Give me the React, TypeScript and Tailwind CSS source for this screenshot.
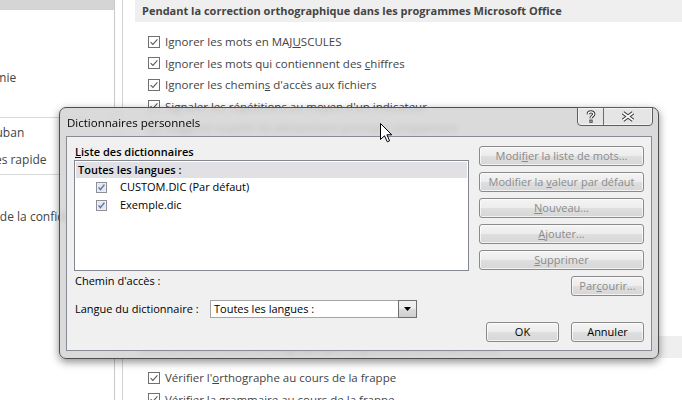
import React from "react";

const sans = "font-['Open_Sans','Noto_Sans',sans-serif]";

/** Office 2013 style check box */
function OfficeCheck() {
  return (
    <svg width="12" height="12" viewBox="0 0 12 12" className="shrink-0">
      <rect x="0.5" y="0.5" width="11" height="11" fill="#fff" stroke="#6f6f6f" />
      <path d="M2.6 6.1 4.9 8.4 9.4 3.4" fill="none" stroke="#5c5c5c" strokeWidth="1.1" />
    </svg>
  );
}

/** Windows 7 style check box used inside the list */
function WinCheck() {
  return (
    <svg width="11" height="11" viewBox="0 0 11 11" className="shrink-0">
      <rect x="0.5" y="0.5" width="10" height="10" fill="#f4f4f4" stroke="#8e8f94" />
      <rect x="1.5" y="1.5" width="8" height="8" fill="#e4e7ef" />
      <path d="M2.6 5.4 4.4 7.6 8.4 2.6" fill="none" stroke="#5f74b0" strokeWidth="1.5" />
    </svg>
  );
}

function OptionRow({ children }: { children: React.ReactNode }) {
  return (
    <div className="flex h-[21.5px] items-center gap-[5px] pl-[13px] whitespace-nowrap">
      <OfficeCheck />
      <span>{children}</span>
    </div>
  );
}

function NavItem({ children, h }: { children: React.ReactNode; h: string }) {
  return <div className={`flex items-center pl-[10px] whitespace-nowrap ${h}`}>{children}</div>;
}

function WinButton({ children, enabled, w = "w-full" }: { children: React.ReactNode; enabled?: boolean; w?: string }) {
  return (
    <div
      className={`flex h-[20px] items-center justify-center rounded-[3px] border border-[#8a8a8a] bg-[linear-gradient(to_bottom,#f4f4f4_0%,#ececec_50%,#dfdfdf_50%,#d6d6d6_100%)] shadow-[inset_0_0_0_1px_rgba(255,255,255,0.7)] ${w} ${
        enabled ? "text-black" : "text-[#8b8b8b]"
      }`}
    >
      {children}
    </div>
  );
}

function CaptionButtons() {
  return (
    <div className="-mt-px flex h-[19px] overflow-hidden rounded-b-[4px] border border-[#5e5e5e] bg-[rgba(238,238,238,0.55)] shadow-[inset_0_0_0_1px_rgba(255,255,255,0.55)]">
      <div className="flex w-[26px] items-center justify-center border-r border-[#6c6c6c]">
        <svg width="10" height="13" viewBox="0 0 10 13">
          <path d="M2.2 4.2 C2.2 1.2 7.8 1.2 7.8 4 C7.8 6.2 5 6 5 8.3" fill="none" stroke="#3a3a3a" strokeWidth="3.2" />
          <path d="M2.2 4.2 C2.2 1.2 7.8 1.2 7.8 4 C7.8 6.2 5 6 5 8.3" fill="none" stroke="#fff" strokeWidth="1.3" />
          <rect x="3.4" y="9.6" width="3.2" height="3.2" fill="#3a3a3a" />
          <rect x="4.4" y="10.6" width="1.2" height="1.2" fill="#fff" />
        </svg>
      </div>
      <div className="flex w-[48px] items-center justify-center">
        <svg width="14" height="11" viewBox="0 0 14 11">
          <path d="M2 1.8 12 9.2 M12 1.8 2 9.2" fill="none" stroke="#3a3a3a" strokeWidth="3.8" />
          <path d="M2 1.8 12 9.2 M12 1.8 2 9.2" fill="none" stroke="#fff" strokeWidth="1.7" />
        </svg>
      </div>
    </div>
  );
}

function Dialog() {
  return (
    <div className="absolute left-[59px] top-[107px] flex h-[252px] w-[600px] flex-col rounded-[7px] border border-[#4f4f4f] bg-[rgba(210,210,210,0.82)] shadow-[0_3px_8px_rgba(0,0,0,0.45)] backdrop-blur-[3px]">
      {/* title bar */}
      <div className="flex h-[28px] items-start justify-between pl-[7px] pr-[5px]">
        <span className="self-center pt-[1px] text-[11.5px] text-black">Dictionnaires personnels</span>
        <CaptionButtons />
      </div>

      {/* client area */}
      <div className="mx-[6px] mb-[7px] flex flex-1 gap-[10px] border border-[#898c95] bg-[#f0f0f0] pl-[7px] pr-[7px] text-black">
        <div className="flex w-[395px] flex-col pt-[7px]">
          <div className="flex h-[16px] items-center pl-px font-semibold">
            <span>
              <u>L</u>iste des dictionnaires
            </span>
          </div>
          <div className="h-[111px] border border-[#828790] bg-white p-px">
            <div className="flex h-[16px] items-center bg-[#e0e0e5] pl-[2px] font-semibold">Toutes les langues :</div>
            <div className="flex h-[18px] items-center gap-[13px] pl-[20px]">
              <WinCheck />
              <span>CUSTOM.DIC (Par défaut)</span>
            </div>
            <div className="flex h-[18px] items-center gap-[13px] pl-[20px]">
              <WinCheck />
              <span>Exemple.dic</span>
            </div>
          </div>
          <div className="flex h-[20px] items-center pl-px">Chemin d'accès :</div>
          <div className="mt-[9px] flex h-[18px] items-center">
            <span className="w-[136px] pl-px">
              Lan<u>g</u>ue du dictionnaire :
            </span>
            <div className="flex h-[18px] w-[207px]">
              <div className="flex flex-1 items-center border border-r-0 border-[#a5a5a5] bg-white pl-[3px]">
                Toutes les langues :
              </div>
              <div className="flex w-[19px] items-center justify-center border border-[#6f6f6f] bg-[linear-gradient(to_bottom,#f2f2f2_0%,#ebebeb_50%,#dcdcdc_50%,#cfcfcf_100%)]">
                <svg width="7" height="4" viewBox="0 0 7 4">
                  <path d="M0 0H7L3.5 4Z" fill="#000" />
                </svg>
              </div>
            </div>
          </div>
        </div>

        <div className="flex w-[165px] flex-col items-end gap-[6px] pt-[9px]">
          <WinButton>
            <span>
              Modi<u>f</u>ier la liste de mots...
            </span>
          </WinButton>
          <WinButton>
            <span>
              Modifier la <u>v</u>aleur par défaut
            </span>
          </WinButton>
          <WinButton>
            <span>
              <u>N</u>ouveau...
            </span>
          </WinButton>
          <WinButton>
            <span>
              <u>A</u>jouter...
            </span>
          </WinButton>
          <WinButton>
            <span>
              <u>S</u>upprimer
            </span>
          </WinButton>
          <WinButton w="w-[73px]">
            <span>
              Par<u>c</u>ourir...
            </span>
          </WinButton>
          <div className="mt-[20px] flex gap-[12px]">
            <WinButton enabled w="w-[73px]">
              OK
            </WinButton>
            <WinButton enabled w="w-[73px]">
              Annuler
            </WinButton>
          </div>
        </div>
      </div>
    </div>
  );
}

export default function App() {
  return (
    <div className={`relative flex h-[400px] w-[682px] overflow-hidden bg-white text-[11px] text-[#444] ${sans}`}>
      {/* navigation pane, scrolled so only its right part shows */}
      <nav className="mr-[7px] w-[115px] shrink-0 overflow-hidden border-r border-[#c9c9c9]">
        <div className="-ml-[112px] -mt-[20px] flex w-[226px] flex-col text-[12px]">
          <NavItem h="h-[30px] bg-[#d5d5d5]">Vérification</NavItem>
          <NavItem h="h-[26px]">Enregistrement</NavItem>
          <NavItem h="h-[28px]">Langue</NavItem>
          <NavItem h="h-[28px]">Options d'ergonomie</NavItem>
          <NavItem h="h-[22px]">Options avancées</NavItem>
          <div className="flex h-[6px] items-center">
            <div className="h-px w-full bg-[#d8d8d8]" />
          </div>
          <NavItem h="h-[26px]">Personnaliser le ruban</NavItem>
          <NavItem h="h-[28px]">Barre d'outils Accès rapide</NavItem>
          <div className="h-px w-full bg-[#d8d8d8]" />
          <NavItem h="h-[28px]">Compléments</NavItem>
          <NavItem h="h-[28px]">Centre de gestion de la confidentialité</NavItem>
        </div>
      </nav>

      <main className="flex-1 border-l border-[#d4d4d4] pl-[12px] text-[11.5px]">
        <section className="h-[336px] overflow-hidden">
          <h2 className="flex h-[22px] items-center bg-[#efefef] px-[7px] text-[11px] font-bold whitespace-nowrap">
            Pendant la correction orthographique dans les programmes Microsoft Office
          </h2>
          <div className="mt-[9px]">
            <OptionRow>
              Ignorer les mots en MAJ<u>U</u>SCULES
            </OptionRow>
            <OptionRow>
              Ignorer les mots qui contiennent des <u>c</u>hiffres
            </OptionRow>
            <OptionRow>
              Ignorer les chemin<u>s</u> d'accès aux fichiers
            </OptionRow>
            <OptionRow>Signaler les répétitions au moyen d'un indicateur</OptionRow>
            <OptionRow>Suggérer à partir du dictionnaire principal uniquement</OptionRow>
            <OptionRow>Appliquer les règles postréforme de l'orthographe</OptionRow>
          </div>
        </section>
        <section>
          <h2 className="flex h-[22px] items-center bg-[#efefef] px-[7px] text-[11px] font-bold whitespace-nowrap">
            Lors de la correction orthographique et grammaticale dans Word
          </h2>
          <div className="mt-[9px]">
            <OptionRow>
              Vérifier l'<u>o</u>rthographe au cours de la frappe
            </OptionRow>
            <OptionRow>Vérifier la grammaire au cours de la frappe</OptionRow>
          </div>
        </section>
      </main>

      <Dialog />

      {/* mouse pointer */}
      <svg width="13" height="20" viewBox="0 0 13 20" className="absolute left-[380px] top-[123px]">
        <polygon points="0.5,0.5 0.5,16.5 4.5,12.8 7.3,18.8 9.6,17.8 6.9,11.8 11.8,11.8" fill="#fff" stroke="#000" />
      </svg>
    </div>
  );
}
